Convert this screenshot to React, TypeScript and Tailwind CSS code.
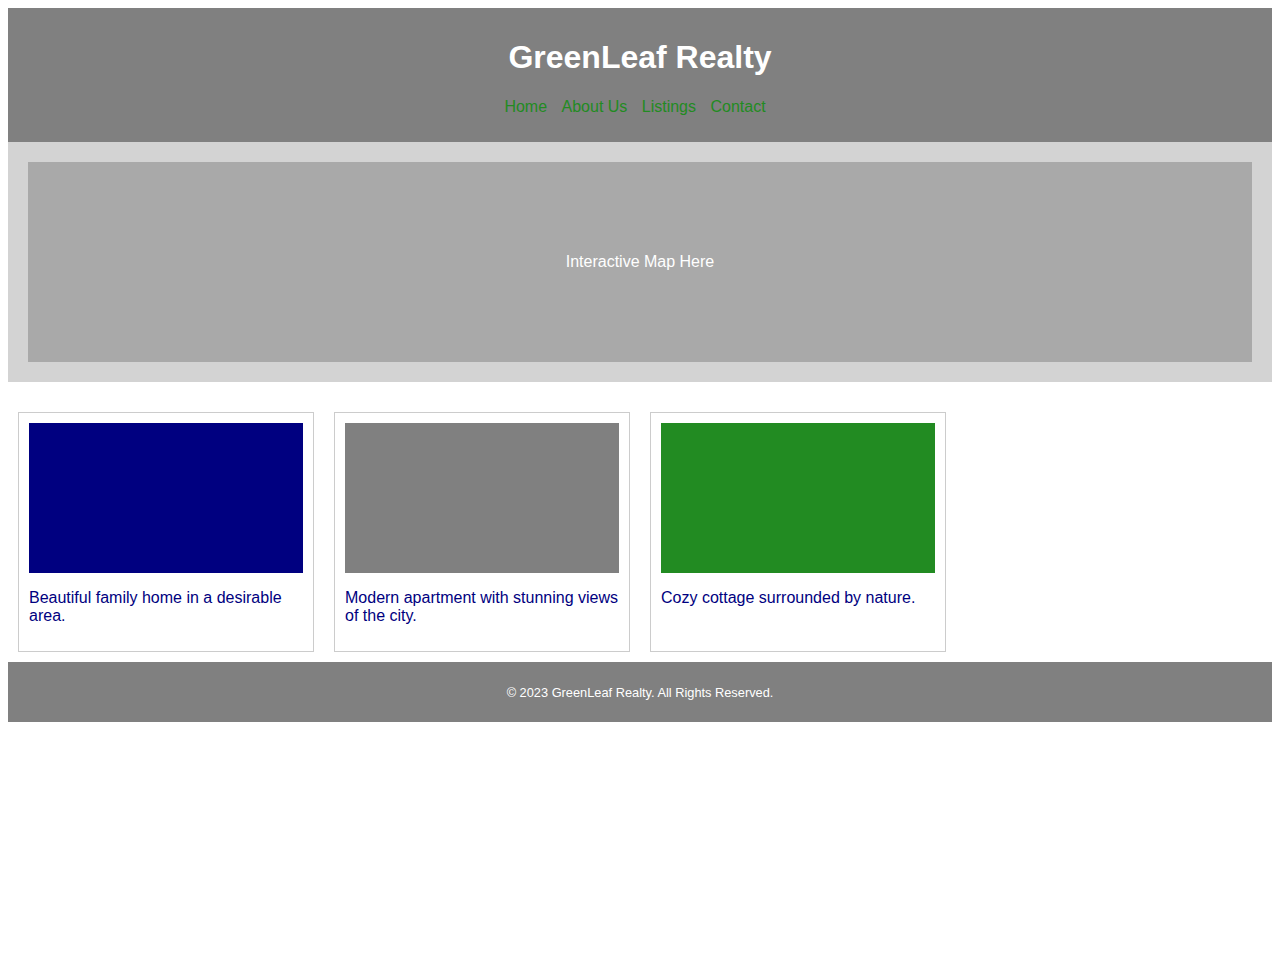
const listings = [
  { id: 1, color: 'bg-[#000080]', text: 'Beautiful family home in a desirable area.' },
  { id: 2, color: 'bg-[#808080]', text: 'Modern apartment with stunning views of the city.' },
  { id: 3, color: 'bg-[#228b22]', text: 'Cozy cottage surrounded by nature.' },
];

const links = ['Home', 'About Us', 'Listings', 'Contact'];

export default function App() {
  return (
    <div className="min-h-[972px] bg-white p-2 font-['Liberation_Sans',Arial,sans-serif] text-base">
      {/* Header */}
      <header className="bg-[#808080] py-[10px] text-center">
        <h1 className="mt-[21px] mb-[22px] text-[32px] font-bold leading-[37px] text-white">
          GreenLeaf Realty
        </h1>
        <nav className="mb-[16px] flex justify-center gap-[14.45px] pr-[10px] leading-[18px]">
          {links.map((link) => (
            <a key={link} href="#" className="text-[#228b22]">
              {link}
            </a>
          ))}
        </nav>
      </header>

      {/* Map */}
      <section className="bg-[#d3d3d3] p-[20px]">
        <div className="flex h-[200px] items-center justify-center bg-[#a9a9a9] text-white">
          Interactive Map Here
        </div>
      </section>

      {/* Listings */}
      <section className="flex pt-[20px]">
        {listings.map((item) => (
          <div key={item.id} className="m-[10px] w-[296px] border border-[#cccccc] p-[10px]">
            <div className={`h-[150px] w-full ${item.color}`} />
            <p className="my-[16px] leading-[18px] text-[#000080]">{item.text}</p>
          </div>
        ))}
      </section>

      {/* Footer */}
      <footer className="flex h-[60px] items-center justify-center bg-[#808080] pt-[1px] text-[12.8px] text-white">
        © 2023 GreenLeaf Realty. All Rights Reserved.
      </footer>
    </div>
  );
}
